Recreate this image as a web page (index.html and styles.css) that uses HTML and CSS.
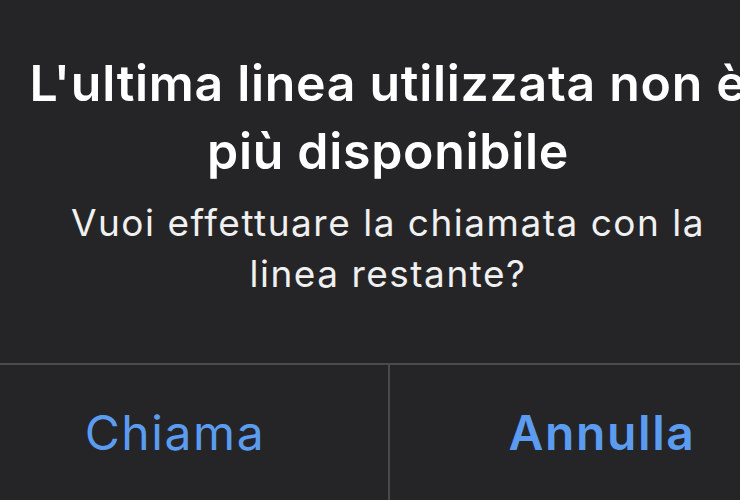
FILE: index.html
```html
<!DOCTYPE html>
<html lang="it">
<head>
<meta charset="utf-8">
<link rel="stylesheet" href="styles.css">
</head>
<body>
<div class="alert">
  <div class="content">
    <h1 class="title">L'ultima linea utilizzata non è<br>più disponibile</h1>
    <p class="message">Vuoi effettuare la chiamata con la<br>linea restante?</p>
  </div>
  <div class="actions">
    <button class="action">Chiama</button>
    <button class="action action-primary">Annulla</button>
  </div>
</div>
</body>
</html>
```

FILE: styles.css
```css
html, body {
  margin: 0;
  padding: 0;
  background: #252527;
  overflow: hidden;
  width: 740px;
  height: 500px;
}
.alert {
  width: 852px;
  margin-left: -38px;
  font-family: Inter, "Liberation Sans", sans-serif;
}
.content {
  height: 363px;
  box-sizing: border-box;
  padding: 49px 0 0;
  text-align: center;
}
.title {
  margin: 0;
  color: #ffffff;
  font-size: 50px;
  line-height: 68px;
  font-weight: 600;
  letter-spacing: 0.7px;
  white-space: nowrap;
}
.message {
  margin: 12px 0 0;
  color: #f0f0f0;
  font-size: 37px;
  line-height: 51px;
  letter-spacing: 1.5px;
  white-space: nowrap;
}
.actions {
  display: grid;
  grid-template-columns: 1fr 1fr;
  border-top: 2px solid #4a4a4c;
}
.action {
  background: none;
  border: 0;
  margin: 0;
  padding: 0;
  height: 140px;
  color: #5b9cf0;
  font-family: inherit;
  font-size: 48px;
  font-weight: 400;
  letter-spacing: 1.6px;
  padding-bottom: 6px;
}
.action + .action {
  border-left: 2px solid #4a4a4c;
}
.action-primary {
  font-weight: 600;
}
```
